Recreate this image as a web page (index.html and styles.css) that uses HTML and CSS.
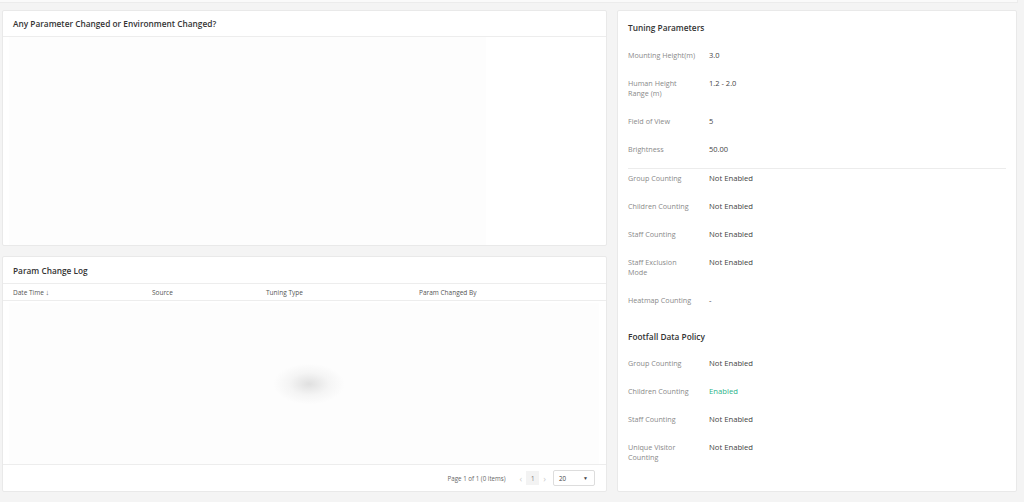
FILE: index.html
```html
<!DOCTYPE html>
<html>
<head>
<meta charset="utf-8">
<link rel="stylesheet" href="styles.css">
</head>
<body>
<div class="topbar"></div>
<div class="layout">
  <div class="left">
    <section class="card card-chart">
      <div class="card-head"><h2>Any Parameter Changed or Environment Changed?</h2></div>
      <div class="chart-body"><div class="chart-area"></div></div>
    </section>
    <section class="card card-log">
      <div class="card-head log-head"><h2>Param Change Log</h2></div>
      <div class="table-head">
        <span class="c1">Date Time <span class="sort">↓</span></span>
        <span class="c2">Source</span>
        <span class="c3">Tuning Type</span>
        <span class="c4">Param Changed By</span>
      </div>
      <div class="table-body"><div class="table-area"><div class="loading"></div></div></div>
      <div class="table-foot">
        <span class="page-info">Page 1 of 1 (0 items)</span>
        <span class="arrow">‹</span>
        <span class="page-num">1</span>
        <span class="arrow">›</span>
        <span class="page-size">20<span class="caret">▼</span></span>
      </div>
    </section>
  </div>
  <section class="card card-params">
    <h2 class="sec-title">Tuning Parameters</h2>
    <div class="rows">
      <div class="row"><span class="lbl">Mounting Height(m)</span><span class="val sm">3.0</span></div>
      <div class="row"><span class="lbl">Human Height Range (m)</span><span class="val sm">1.2 - 2.0</span></div>
      <div class="row"><span class="lbl">Field of View</span><span class="val sm">5</span></div>
      <div class="row"><span class="lbl">Brightness</span><span class="val sm">50.00</span></div>
    </div>
    <div class="divider"></div>
    <div class="rows">
      <div class="row"><span class="lbl">Group Counting</span><span class="val">Not Enabled</span></div>
      <div class="row"><span class="lbl">Children Counting</span><span class="val">Not Enabled</span></div>
      <div class="row"><span class="lbl">Staff Counting</span><span class="val">Not Enabled</span></div>
      <div class="row"><span class="lbl">Staff Exclusion Mode</span><span class="val">Not Enabled</span></div>
      <div class="row"><span class="lbl">Heatmap Counting</span><span class="val">-</span></div>
    </div>
    <h2 class="sec-title sec2">Footfall Data Policy</h2>
    <div class="rows">
      <div class="row"><span class="lbl">Group Counting</span><span class="val">Not Enabled</span></div>
      <div class="row"><span class="lbl">Children Counting</span><span class="val on">Enabled</span></div>
      <div class="row"><span class="lbl">Staff Counting</span><span class="val">Not Enabled</span></div>
      <div class="row"><span class="lbl">Unique Visitor Counting</span><span class="val">Not Enabled</span></div>
    </div>
  </section>
</div>
</body>
</html>
```

FILE: styles.css
```css
* { box-sizing: border-box; }
html, body { margin: 0; padding: 0; }
body {
  background: #f4f4f4;
  font-family: "Open Sans", "Noto Sans", sans-serif;
  color: #333;
  width: 1024px;
  height: 502px;
  overflow: hidden;
}
.topbar {
  height: 3px;
  width: 1018px;
  background: #fafafa;
  border-bottom: 1px solid #ececec;
  border-right: 1px solid #ececec;
}
.layout {
  display: grid;
  grid-template-columns: 605px 400px;
  column-gap: 10px;
  padding: 7px 0 0 2px;
}
.left {
  display: flex;
  flex-direction: column;
  gap: 10px;
}
.card {
  background: #fff;
  border: 1px solid #e9e9e9;
  border-radius: 2px;
}
.card-chart { height: 236px; display: flex; flex-direction: column; }
.card-log { height: 236px; display: flex; flex-direction: column; }
.card-params { height: 482px; padding: 11px 10px 0 10px; }

h2 {
  margin: 0;
  font-size: 8.3px;
  font-weight: 600;
  color: #333;
}
.card-head {
  height: 26px;
  padding: 0 0 0 10px;
  display: flex;
  align-items: center;
  border-bottom: 1px solid #ededed;
}
.log-head { height: 27px; }
.chart-body { flex: 1; padding: 0 120px 0 6px; }
.chart-area { height: 100%; background: #fdfdfd; }

.table-head {
  height: 17px;
  display: flex;
  align-items: center;
  padding-left: 10px;
  font-size: 6.5px;
  color: #555;
  border-bottom: 1px solid #ededed;
}
.table-head > span { display: block; }
.sort { font-size: 7.5px; color: #666; }
.c1 { width: 139px; }
.c2 { width: 114px; }
.c3 { width: 153px; }
.table-body { flex: 1; padding: 2px 7px 0 6px; }
.table-area {
  height: 100%;
  background: #fdfdfd;
  display: flex;
  align-items: center;
  justify-content: center;
}
.loading {
  width: 70px;
  height: 40px;
  margin-left: 10px;
  background: radial-gradient(ellipse at center, rgba(200,200,200,0.55) 0%, rgba(220,220,220,0.25) 40%, rgba(255,255,255,0) 72%);
}
.table-foot {
  height: 27px;
  border-top: 1px solid #ededed;
  display: flex;
  align-items: center;
  justify-content: flex-end;
  padding-right: 11px;
  font-size: 6.2px;
  color: #666;
}
.page-info { margin-right: 10px; }
.arrow { color: #ccc; font-size: 9px; margin: 0 4px; }
.page-num {
  width: 13px;
  height: 14px;
  background: #f3f3f3;
  display: flex;
  align-items: center;
  justify-content: center;
  color: #777;
}
.page-size {
  width: 42px;
  height: 16px;
  margin-left: 3px;
  border: 1px solid #ddd;
  border-radius: 2px;
  display: flex;
  align-items: center;
  justify-content: space-between;
  padding: 0 6px 0 5px;
  color: #444;
}
.caret { font-size: 5px; color: #444; }

.sec-title { line-height: 12px; }
.sec2 { margin-top: 26px; }
.rows {
  display: flex;
  flex-direction: column;
  gap: 18px;
  margin-top: 16px;
}
.sec2 + .rows { margin-top: 15px; }
.divider + .rows { margin-top: 4px; }
.row {
  display: flex;
  line-height: 10px;
}
.lbl {
  flex: 0 0 81px;
  width: 81px;
  padding-right: 12.5px;
  font-size: 7.2px;
  color: #8a8a8a;
}
.val { font-size: 7.7px; color: #444; }
.val.sm { font-size: 7.5px; }
.val.on { color: #2bb38a; }
.divider {
  height: 1px;
  background: #ececec;
  margin-top: 14px;
}
```
